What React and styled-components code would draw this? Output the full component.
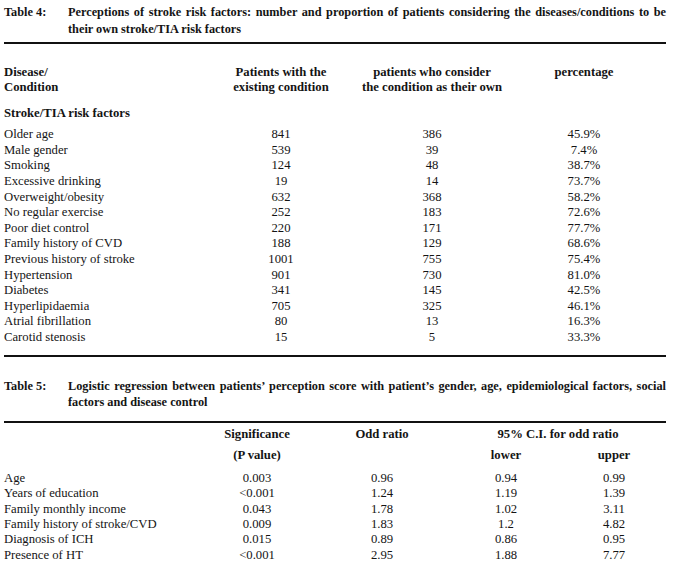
import React from 'react';
import styled, { createGlobalStyle } from 'styled-components';

const GlobalStyle = createGlobalStyle`
  html, body {
    margin: 0;
    padding: 0;
    background: #fff;
  }
  body {
    font-family: "Liberation Serif", "Times New Roman", serif;
    color: #141414;
  }
`;

const T4_COLS = '196px 162px 140px 1fr';
const T5_COLS = '196px 114px 136px 112px 1fr';

const risks = [
  ['Older age', '841', '386', '45.9%'],
  ['Male gender', '539', '39', '7.4%'],
  ['Smoking', '124', '48', '38.7%'],
  ['Excessive drinking', '19', '14', '73.7%'],
  ['Overweight/obesity', '632', '368', '58.2%'],
  ['No regular exercise', '252', '183', '72.6%'],
  ['Poor diet control', '220', '171', '77.7%'],
  ['Family history of CVD', '188', '129', '68.6%'],
  ['Previous history of stroke', '1001', '755', '75.4%'],
  ['Hypertension', '901', '730', '81.0%'],
  ['Diabetes', '341', '145', '42.5%'],
  ['Hyperlipidaemia', '705', '325', '46.1%'],
  ['Atrial fibrillation', '80', '13', '16.3%'],
  ['Carotid stenosis', '15', '5', '33.3%'],
];

const regression = [
  ['Age', '0.003', '0.96', '0.94', '0.99'],
  ['Years of education', '<0.001', '1.24', '1.19', '1.39'],
  ['Family monthly income', '0.043', '1.78', '1.02', '3.11'],
  ['Family history of stroke/CVD', '0.009', '1.83', '1.2', '4.82'],
  ['Diagnosis of ICH', '0.015', '0.89', '0.86', '0.95'],
  ['Presence of HT', '<0.001', '2.95', '1.88', '7.77'],
];

const Page = styled.div`
  width: 673px;
  box-sizing: border-box;
  padding: 4px 7px 0 4px;
`;

const Caption = styled.div`
  display: flex;
  font-size: 12.3px;
  font-weight: bold;
  line-height: 16.5px;
  margin-top: ${({ $gap }) => $gap || 0}px;
`;

const CaptionLabel = styled.div`
  width: 64px;
  flex: none;
`;

const CaptionText = styled.div`
  flex: 1;
  min-width: 0;
`;

const CaptionLine = styled.div`
  white-space: nowrap;
  text-align: left;
  text-align-last: ${({ $justify }) => ($justify ? 'justify' : 'left')};
`;

const Rule = styled.div`
  border-top: 2px solid #111;
  margin-top: ${({ $gap }) => $gap}px;
`;

const Block = styled.div`
  margin-top: ${({ $gap }) => $gap}px;
`;

const Row = styled.div`
  display: grid;
  grid-template-columns: ${({ $cols }) => $cols};
  font-size: 12.7px;
  line-height: ${({ $lh }) => $lh}px;
  font-weight: ${({ $bold }) => ($bold ? 'bold' : 'normal')};
`;

const Cell = styled.div`
  text-align: ${({ $align }) => $align || 'center'};
  white-space: nowrap;
  grid-column: ${({ $span }) => ($span ? `span ${$span}` : 'auto')};
`;

const App = () => (
  <>
    <GlobalStyle />
    <Page>
      <Caption>
        <CaptionLabel>Table 4:</CaptionLabel>
        <CaptionText>
          <CaptionLine $justify>
            Perceptions of stroke risk factors: number and proportion of patients considering the diseases/conditions to be
          </CaptionLine>
          <CaptionLine>their own stroke/TIA risk factors</CaptionLine>
        </CaptionText>
      </Caption>
      <Rule $gap={5} />

      <Block $gap={20.5}>
        <Row $cols={T4_COLS} $lh={15} $bold>
          <Cell $align="left">Disease/<br />Condition</Cell>
          <Cell>Patients with the<br />existing condition</Cell>
          <Cell>patients who consider<br />the condition as their own</Cell>
          <Cell>percentage</Cell>
        </Row>
      </Block>

      <Block $gap={11}>
        <Row $cols="1fr" $lh={15} $bold>
          <Cell $align="left">Stroke/TIA risk factors</Cell>
        </Row>
      </Block>

      <Block $gap={6.7}>
        {risks.map((r) => (
          <Row key={r[0]} $cols={T4_COLS} $lh={15.6}>
            <Cell $align="left">{r[0]}</Cell>
            <Cell>{r[1]}</Cell>
            <Cell>{r[2]}</Cell>
            <Cell>{r[3]}</Cell>
          </Row>
        ))}
      </Block>
      <Rule $gap={9} />

      <Caption $gap={21.4}>
        <CaptionLabel>Table 5:</CaptionLabel>
        <CaptionText>
          <CaptionLine $justify>
            Logistic regression between patients’ perception score with patient’s gender, age, epidemiological factors, social
          </CaptionLine>
          <CaptionLine>factors and disease control</CaptionLine>
        </CaptionText>
      </Caption>
      <Rule $gap={10} />

      <Block $gap={1.5}>
        <Row $cols={T5_COLS} $lh={21} $bold>
          <Cell />
          <Cell>Significance</Cell>
          <Cell>Odd ratio</Cell>
          <Cell $span={2}>95% C.I. for odd ratio</Cell>
          <Cell />
          <Cell>(P value)</Cell>
          <Cell />
          <Cell>lower</Cell>
          <Cell>upper</Cell>
        </Row>
      </Block>

      <Block $gap={4.3}>
        {regression.map((r) => (
          <Row key={r[0]} $cols={T5_COLS} $lh={15.4}>
            <Cell $align="left">{r[0]}</Cell>
            <Cell>{r[1]}</Cell>
            <Cell>{r[2]}</Cell>
            <Cell>{r[3]}</Cell>
            <Cell>{r[4]}</Cell>
          </Row>
        ))}
      </Block>
    </Page>
  </>
);

export default App;
